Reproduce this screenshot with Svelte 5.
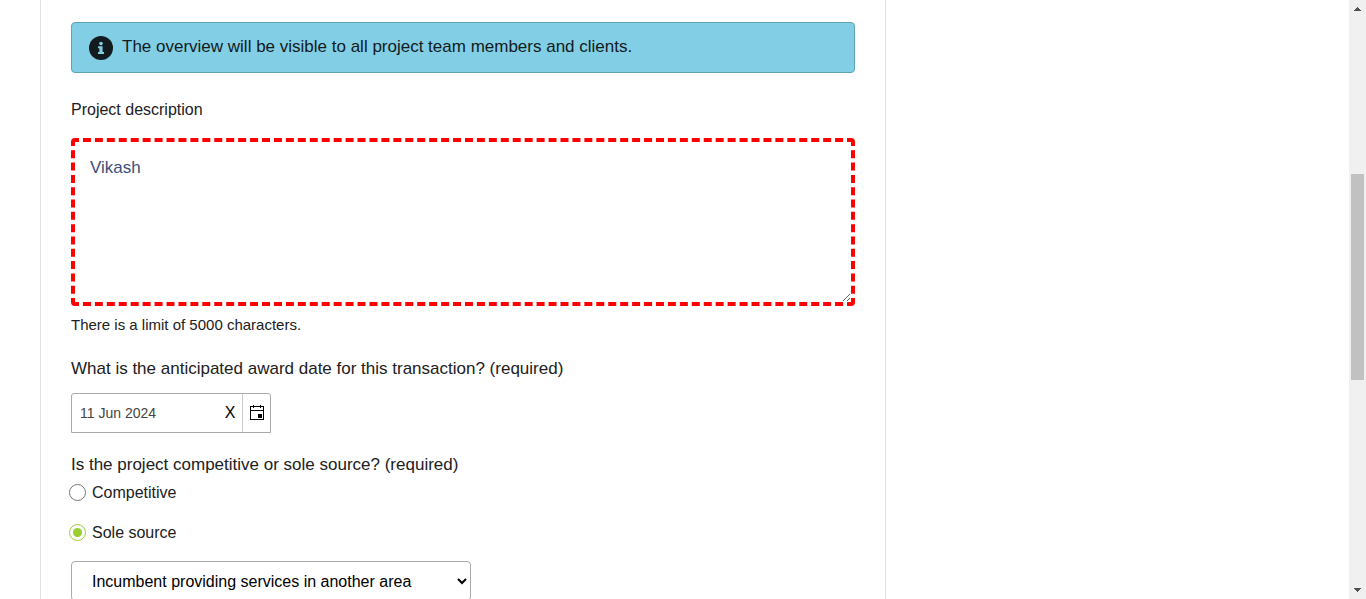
<script>
  let description = $state('Vikash');
  let awardDate = $state('11 Jun 2024');
  let sourcing = $state('sole');
  let reason = $state('incumbent');
</script>

<div class="page">
  <main>
    <form class="card">
      <div class="notice" role="note">
        <svg width="24" height="24" viewBox="0 0 24 24" aria-hidden="true">
          <circle cx="12" cy="12" r="12" fill="#121b1e" />
          <circle cx="12" cy="7.6" r="1.8" fill="#82cee4" />
          <path d="M9 10.3h4.6v5.7H15v2H9v-2h1.4v-3.7H9z" fill="#82cee4" />
        </svg>
        <span>The overview will be visible to all project team members and clients.</span>
      </div>

      <label class="title" for="description">Project description</label>
      <textarea id="description" bind:value={description} maxlength="5000" aria-describedby="limit"></textarea>
      <p class="hint" id="limit">There is a limit of 5000 characters.</p>

      <label class="question" for="award">What is the anticipated award date for this transaction? (required)</label>
      <div class="date">
        <input id="award" type="text" bind:value={awardDate} />
        <button class="clear" type="button" aria-label="Clear date" onclick={() => (awardDate = '')}>X</button>
        <button class="pick" type="button" aria-label="Choose date">
          <svg width="16" height="16" viewBox="0 0 16 16" aria-hidden="true">
            <path d="M1 1h14v1H1zM1 5h14v1H1zM1 14h14v1H1zM1 1h1v14H1zM14 1h1v14h-1zM4 0h1v3H4zM3 1h3v1H3zM11 0h1v3h-1zM10 1h3v1h-3z" />
            <path d="M9 9h4v4H9z" />
          </svg>
        </button>
      </div>

      <fieldset>
        <legend>Is the project competitive or sole source? (required)</legend>
        <label class="choice"><input type="radio" name="sourcing" value="competitive" bind:group={sourcing} />Competitive</label>
        <label class="choice"><input type="radio" name="sourcing" value="sole" bind:group={sourcing} />Sole source</label>
      </fieldset>

      <select aria-label="Sole source reason" bind:value={reason}>
        <option value="incumbent">Incumbent providing services in another area</option>
      </select>
    </form>
  </main>

  <div class="scrollbar" aria-hidden="true">
    <svg width="17" height="17" viewBox="0 0 17 17"><path d="M8 7h1v1h1v1h1v1h1v1H5v-1h1V9h1V8h1z" fill="#505050" /></svg>
    <div class="track"><div class="thumb"></div></div>
    <svg width="17" height="17" viewBox="0 0 17 17"><path d="M5 6h7v1h-1v1h-1v1H9v1H8V9H7V8H6V7H5z" fill="#505050" /></svg>
  </div>
</div>

<style>
  :global(body) {
    margin: 0;
    background: #fff;
  }

  .page {
    display: flex;
    height: 100vh;
    overflow: hidden;
    font: 16px/24px "Liberation Sans", Arial, sans-serif;
    color: #212121;
  }

  .page * {
    box-sizing: border-box;
  }

  main {
    flex: 1;
    min-width: 0;
    padding: 0 40px;
  }

  .card {
    display: flex;
    flex-direction: column;
    align-items: flex-start;
    max-width: 846px;
    padding: 22px 30px 40px;
    border: solid #e0e0e6;
    border-width: 0 1px;
  }

  .notice,
  .question,
  legend,
  textarea {
    font-size: 17px;
  }

  .notice {
    display: flex;
    align-items: center;
    gap: 9px;
    width: 100%;
    padding: 12px 17px 11px;
    border: 1px solid #5fa3b7;
    border-radius: 4px;
    background: #82cee4;
    color: #121b1e;
  }

  .notice svg {
    flex: none;
  }

  .notice span {
    padding-bottom: 2px;
  }

  .title {
    margin: 25px 0 16px;
  }

  textarea {
    display: block;
    width: 100%;
    height: 168px;
    padding: 14px 15px;
    border: 4px dashed #f00;
    border-radius: 4px;
    outline: none;
    background: #fff;
    color: #404f79;
    font-family: inherit;
    line-height: 24px;
    resize: both;
  }

  .hint {
    margin: 7px 0 0;
    font-size: 15px;
  }

  .question {
    margin: 20px 0 12px;
  }

  .date {
    display: flex;
    width: 200px;
    height: 40px;
    border: 1px solid #aaa;
    border-radius: 3px 3px 0 0;
  }

  .date input {
    flex: 1;
    min-width: 0;
    padding: 0 8px;
    border: 0;
    outline: none;
    background: none;
    color: #444;
    font: inherit;
    font-size: 14px;
  }

  .date button {
    display: flex;
    align-items: center;
    justify-content: center;
    padding: 0;
    border: 0;
    background: none;
    color: #000;
    font: inherit;
  }

  .date .clear {
    width: 24px;
  }

  .date .pick {
    width: 28px;
    border-left: 1px solid #ccc;
  }

  fieldset {
    display: flex;
    flex-direction: column;
    gap: 16px;
    margin: 20px 0 16px;
    padding: 0;
    border: 0;
  }

  legend {
    padding: 0 0 4px;
  }

  .choice {
    display: flex;
    align-items: center;
    gap: 6px;
  }

  .choice input {
    display: grid;
    place-items: center;
    width: 17px;
    height: 17px;
    margin: 0 0 2px -2px;
    border: 1px solid #767676;
    border-radius: 50%;
    background: #fff;
    appearance: none;
  }

  .choice input:checked {
    border-color: #9acd32;
  }

  .choice input:checked::before {
    width: 9px;
    height: 9px;
    border-radius: 50%;
    background: #9acd32;
    content: "";
  }

  select {
    width: 400px;
    max-width: 100%;
    height: 40px;
    padding: 0 16px;
    border: 1px solid #aaa;
    border-radius: 4px;
    background: #fff;
    color: #000;
    font: inherit;
  }

  .scrollbar {
    display: flex;
    flex: none;
    flex-direction: column;
    width: 17px;
    background: #f0f0f0;
  }

  .scrollbar svg {
    display: block;
    flex: none;
  }

  .track {
    display: grid;
    flex: 1;
    grid-template-rows: 157fr 206fr 202fr;
    padding: 0 2px;
  }

  .thumb {
    grid-row: 2;
    background: #c1c1c1;
  }
</style>
